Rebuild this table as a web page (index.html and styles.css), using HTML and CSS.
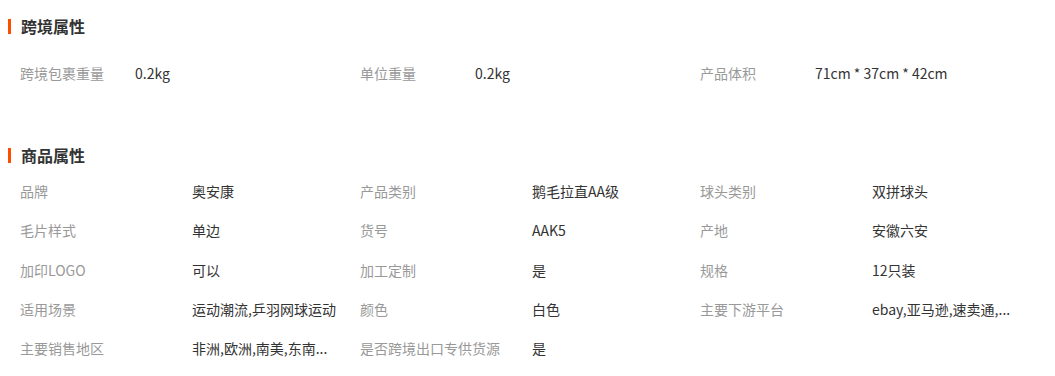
FILE: index.html
```html
<!DOCTYPE html>
<html lang="zh-CN">
<head>
<meta charset="utf-8">
<title>属性</title>
<link rel="stylesheet" href="styles.css">
</head>
<body>
<section class="block block-cross">
  <h2 class="title">跨境属性</h2>
  <div class="grid grid-cross">
    <span class="label">跨境包裹重量</span><span class="value">0.2kg</span>
    <span class="label">单位重量</span><span class="value">0.2kg</span>
    <span class="label">产品体积</span><span class="value">71cm * 37cm * 42cm</span>
  </div>
</section>
<section class="block block-goods">
  <h2 class="title">商品属性</h2>
  <div class="grid grid-goods">
    <span class="label">品牌</span><span class="value">奥安康</span>
    <span class="label">产品类别</span><span class="value">鹅毛拉直AA级</span>
    <span class="label">球头类别</span><span class="value">双拼球头</span>

    <span class="label">毛片样式</span><span class="value">单边</span>
    <span class="label">货号</span><span class="value">AAK5</span>
    <span class="label">产地</span><span class="value">安徽六安</span>

    <span class="label">加印LOGO</span><span class="value">可以</span>
    <span class="label">加工定制</span><span class="value">是</span>
    <span class="label">规格</span><span class="value">12只装</span>

    <span class="label">适用场景</span><span class="value">运动潮流,乒羽网球运动</span>
    <span class="label">颜色</span><span class="value">白色</span>
    <span class="label">主要下游平台</span><span class="value">ebay,亚马逊,速卖通,...</span>

    <span class="label">主要销售地区</span><span class="value">非洲,欧洲,南美,东南...</span>
    <span class="label">是否跨境出口专供货源</span><span class="value">是</span>
  </div>
</section>
</body>
</html>
```

FILE: styles.css
```css
html, body {
  margin: 0;
  padding: 0;
  background: #fff;
}
body {
  font-family: "Noto Sans CJK SC", "Microsoft YaHei", sans-serif;
  font-size: 14px;
  color: #333;
  width: 1055px;
  height: 376px;
  overflow: hidden;
}
.block {
  padding-left: 8px;
}
.block-cross {
  padding-top: 16px;
}
.block-goods {
  padding-top: 52px;
}
.title {
  margin: 0;
  display: flex;
  align-items: center;
  gap: 10px;
  font-size: 16px;
  font-weight: bold;
  line-height: 20px;
  color: #333;
}
.title::before {
  content: "";
  width: 3px;
  height: 15px;
  background: #ff4d00;
}
.grid {
  display: grid;
  padding-left: 12px;
  white-space: nowrap;
}
.grid-cross {
  margin-top: 17px;
  grid-template-columns: 115px 225px 115px 225px 115px 225px;
  grid-auto-rows: 40px;
  align-items: center;
}
.grid-goods {
  margin-top: 6.5px;
  grid-template-columns: 172px 168px 172px 168px 172px 168px;
  grid-auto-rows: 39.25px;
  align-items: center;
}
.label {
  color: #999;
}
.value {
  color: #333;
}
```
